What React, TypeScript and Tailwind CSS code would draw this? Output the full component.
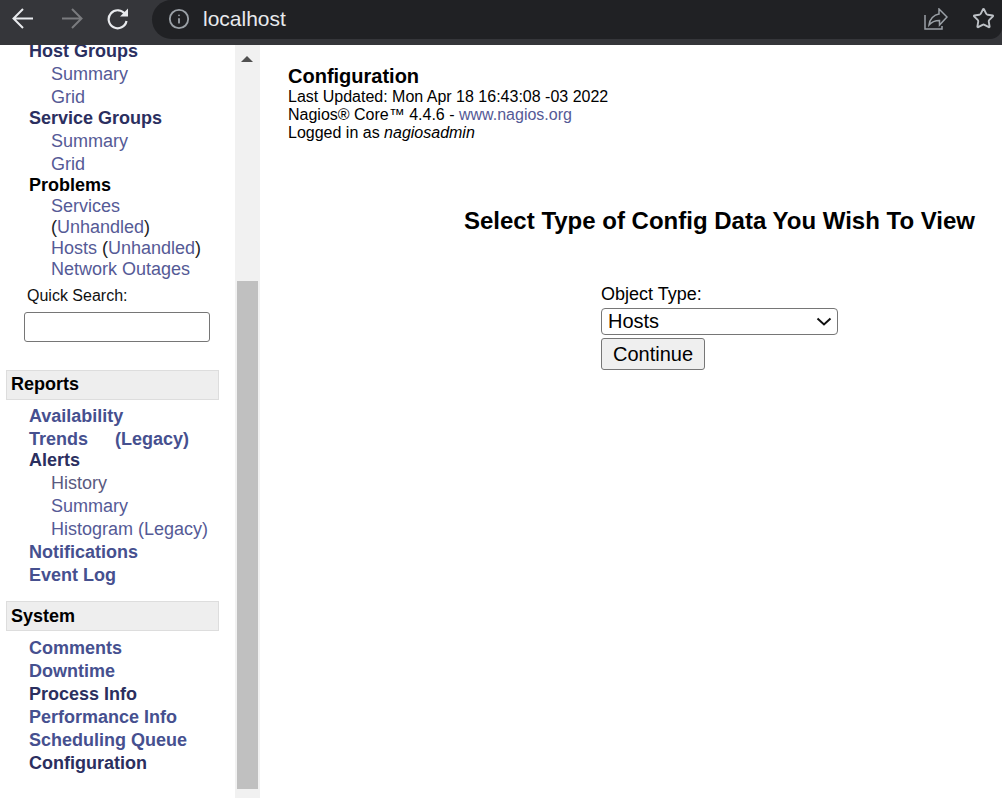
import React from "react";
import { Info, Star } from "lucide-react";

const LINK = "text-[#555a96]";
const BOLD_LINK = "text-[#46508f]";
const DARK = "text-[#2b2f5f]";

function Row({ h, indent, bold, color, children }: { h: string; indent?: boolean; bold?: boolean; color?: string; children: React.ReactNode }) {
  return (
    <div className={`${h} leading-[21px] whitespace-nowrap ${indent ? "pl-[51px]" : "pl-[29px]"} ${bold ? "font-bold" : ""} ${color ?? ""}`}>
      {children}
    </div>
  );
}

function SectionHead({ leading, children }: { leading: string; children: React.ReactNode }) {
  return (
    <div className={`ml-[6px] w-[213px] h-[30px] bg-[#eeeeee] border border-[#dddddd] pl-[4px] ${leading} font-bold text-black`}>
      {children}
    </div>
  );
}

function Sidebar() {
  return (
    <div className="w-[235px] shrink-0 overflow-hidden text-[18px]">
      <div className="-mt-[4px]">
        <Row h="h-[23px]" bold color={DARK}>Host Groups</Row>
        <Row h="h-[23px]" indent color={LINK}>Summary</Row>
        <Row h="h-[21px]" indent color={LINK}>Grid</Row>
        <Row h="h-[23px]" bold color={DARK}>Service Groups</Row>
        <Row h="h-[23px]" indent color={LINK}>Summary</Row>
        <Row h="h-[21px]" indent color={LINK}>Grid</Row>
        <Row h="h-[21px]" bold color="text-black">Problems</Row>
        <Row h="h-[21px]" indent color={LINK}>Services</Row>
        <Row h="h-[21px]" indent color="text-[#222]">(<span className={LINK}>Unhandled</span>)</Row>
        <Row h="h-[21px]" indent color="text-[#222]"><span className={LINK}>Hosts</span> (<span className={LINK}>Unhandled</span>)</Row>
        <Row h="h-[21px]" indent color={LINK}>Network Outages</Row>
        <div className="pl-[27px] mt-[5px] text-[16px] leading-[21px] h-[21px] text-[#111]">Quick Search:</div>
        <div className="pl-[24px] mt-[6px]">
          <input aria-label="Quick Search" className="block w-[186px] h-[30px] bg-white border border-[#767676] rounded-[3px]" />
        </div>
        <div className="mt-[28px]"><SectionHead leading="leading-[26px]">Reports</SectionHead></div>
        <div className="mt-[6px]">
          <Row h="h-[23px]" bold color={BOLD_LINK}>Availability</Row>
          <Row h="h-[21px]" bold color={BOLD_LINK}>Trends<span className="ml-[27px]">(Legacy)</span></Row>
          <Row h="h-[23px]" bold color={DARK}>Alerts</Row>
          <Row h="h-[23px]" indent color="text-[#5a5a80]">History</Row>
          <Row h="h-[23px]" indent color={LINK}>Summary</Row>
          <Row h="h-[23px]" indent color={LINK}>Histogram (Legacy)</Row>
          <Row h="h-[23px]" bold color={BOLD_LINK}>Notifications</Row>
          <Row h="h-[23px]" bold color={BOLD_LINK}>Event Log</Row>
        </div>
        <div className="mt-[13px]"><SectionHead leading="leading-[28px]">System</SectionHead></div>
        <div className="mt-[7px]">
          <Row h="h-[23px]" bold color={BOLD_LINK}>Comments</Row>
          <Row h="h-[23px]" bold color={BOLD_LINK}>Downtime</Row>
          <Row h="h-[23px]" bold color={DARK}>Process Info</Row>
          <Row h="h-[23px]" bold color={BOLD_LINK}>Performance Info</Row>
          <Row h="h-[23px]" bold color={BOLD_LINK}>Scheduling Queue</Row>
          <Row h="h-[23px]" bold color={DARK}>Configuration</Row>
        </div>
      </div>
    </div>
  );
}

function Scrollbar() {
  return (
    <div className="w-[25px] shrink-0 bg-[#f1f1f1] pl-[2px]">
      <div className="ml-[4px] mt-[11px] w-0 h-0 border-l-[6px] border-r-[6px] border-b-[6px] border-l-transparent border-r-transparent border-b-[#505050]" />
      <div className="mt-[219px] w-[21px] h-[508px] bg-[#c0c0c0]" />
    </div>
  );
}

function TopBar() {
  return (
    <div className="h-[45px] shrink-0 bg-[#35363a] flex items-start">
      <div className="w-[152px] h-[39px] shrink-0 flex items-center">
        <svg width="24" height="24" viewBox="0 0 24 24" className="ml-[11px] -mt-[3px]" fill="none" stroke="#e8eaed" strokeWidth="2">
          <path d="M22 12.5H3M12 3l-9.500 9.500L12 22" />
        </svg>
        <svg width="24" height="24" viewBox="0 0 24 24" className="ml-[25px] -mt-[3px]" fill="none" stroke="#7a7b7e" strokeWidth="2">
          <path d="M2 12.5h19M12 3l9.500 9.500L12 22" />
        </svg>
        <svg width="24" height="24" viewBox="0 0 24 24" className="ml-[22px] -mt-[3px]" fill="none" stroke="#e8eaed" strokeWidth="2.2">
          <path d="M19.3 8.500A9 9 0 1 0 20.5 15" />
          <path d="M22 2.500v8H14z" fill="#e8eaed" stroke="none" />
        </svg>
      </div>
      <div className="flex-1 h-[39px] bg-[#202124] rounded-bl-[20px] rounded-tl-[20px] rounded-br-[12px] flex items-center pl-[16px] pr-[7px] pb-[2px]">
        <Info size={22} className="text-[#9aa0a6]" strokeWidth={2} />
        <span className="ml-[13px] text-[21px] text-[#e8eaed]">localhost</span>
        <div className="flex-1" />
        <svg width="24" height="22" viewBox="0 0 24 22" fill="none" stroke="#9aa0a6" strokeWidth="1.5">
          <path d="M1 7v14h17v-3" />
          <path d="M5 17C5.500 11 10 6.500 15 6V1l8 8-7.500 8v-4.500C11 12.500 7.500 14 5 17z" />
        </svg>
        <Star size={23} className="ml-[24px] text-[#bdc1c6]" strokeWidth={2} />
      </div>
    </div>
  );
}

function Main() {
  return (
    <div className="flex-1 min-w-0 overflow-hidden text-black">
      <div className="pl-[28px] pt-[20px]">
        <div className="text-[20px] leading-[23px] font-bold">Configuration</div>
        <div className="text-[16px] leading-[18px]">Last Updated: Mon Apr 18 16:43:08 -03 2022</div>
        <div className="text-[16px] leading-[18px]">Nagios® Core™ 4.4.6 - <a className={LINK}>www.nagios.org</a></div>
        <div className="text-[16px] leading-[18px]">Logged in as <i>nagiosadmin</i></div>
      </div>
      <div className="ml-[204px] mt-[65px] text-[24px] leading-[28px] font-bold whitespace-nowrap">Select Type of Config Data You Wish To View</div>
      <div className="ml-[341px] mt-[49px]">
        <div className="text-[18px] leading-[21px]">Object Type:</div>
        <div className="relative mt-[3px] w-[237px] h-[27px]">
          <select aria-label="Object Type" className="block appearance-none w-full h-full bg-white border border-[#767676] rounded-[4px] text-[20px] leading-[23px] pl-[6px]">
            <option>Hosts</option>
          </select>
          <svg width="16" height="9" viewBox="0 0 16 9" className="absolute left-[215px] top-[9px] pointer-events-none" fill="none" stroke="#111" strokeWidth="2">
            <path d="M1.500 1.500L8 7.500l6.500-6" />
          </svg>
        </div>
        <button type="button" className="block mt-[3px] w-[104px] h-[32px] bg-[#efefef] border border-[#767676] rounded-[3px] text-[20px]">Continue</button>
      </div>
    </div>
  );
}

export default function App() {
  return (
    <div className="w-[1002px] h-[798px] overflow-hidden flex flex-col bg-white font-['Liberation_Sans',Arial,sans-serif]">
      <TopBar />
      <div className="flex-1 min-h-0 flex">
        <Sidebar />
        <Scrollbar />
        <Main />
      </div>
    </div>
  );
}
